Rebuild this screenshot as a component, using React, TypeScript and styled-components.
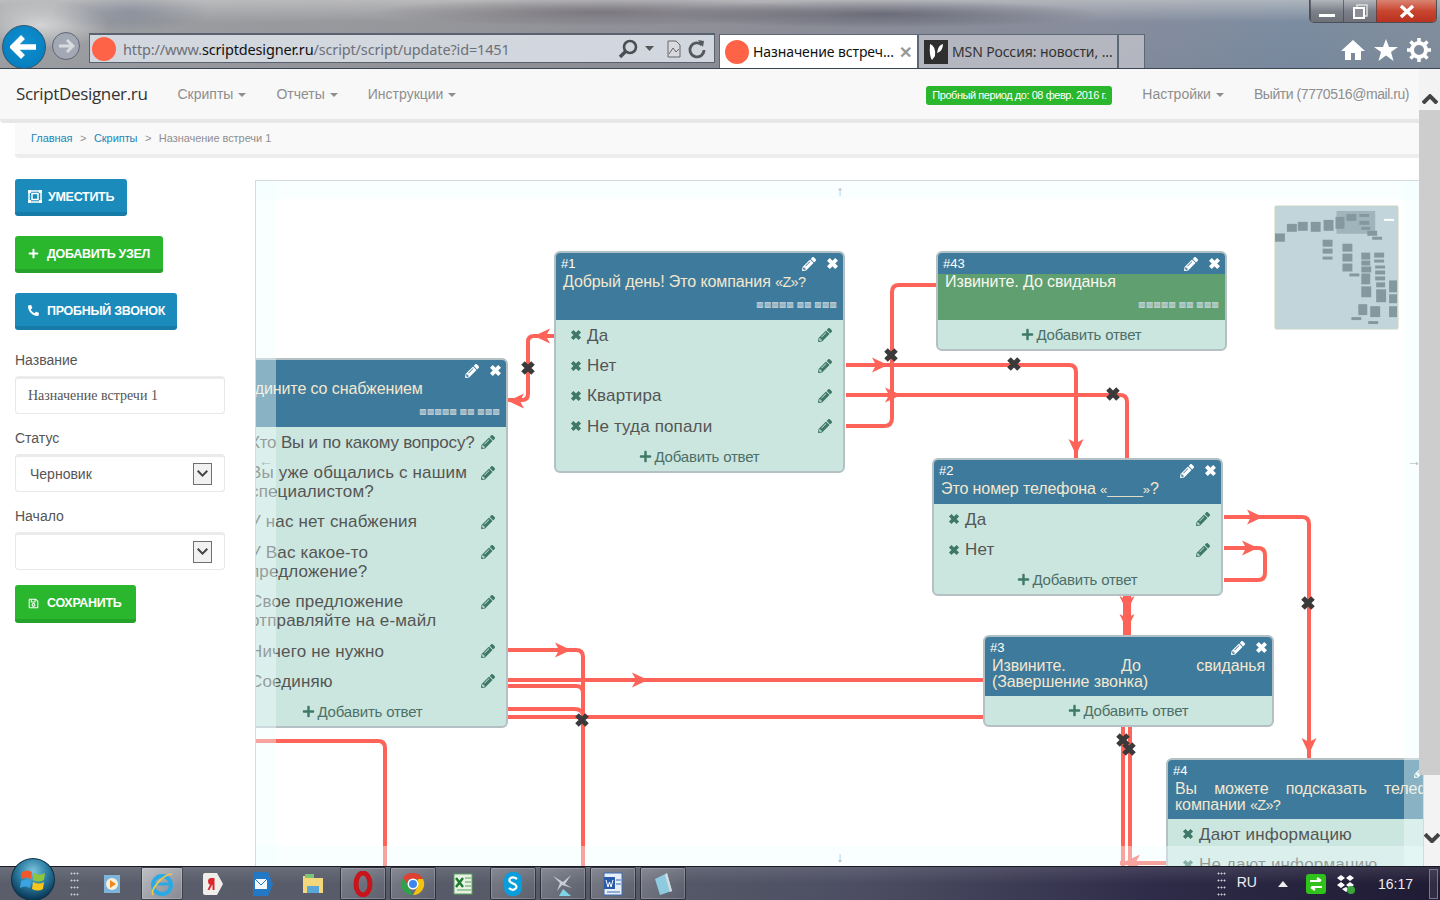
import React from "react";
import styled, { createGlobalStyle } from "styled-components";
import { FaPencilAlt, FaPlus, FaPhone, FaRegSave } from "react-icons/fa";

const Global = createGlobalStyle`
  html, body { margin: 0; padding: 0; width: 1440px; height: 900px; overflow: hidden; background: #fff; }
  body { font-family: "Liberation Sans", Arial, sans-serif; }
  * { box-sizing: border-box; }
`;

const Shell = styled.div`display: flex; flex-direction: column; width: 1440px; height: 900px; overflow: hidden;`;

/* ---------- browser chrome ---------- */
const Chrome = styled.header`
  height: 69px; flex: none; display: flex; flex-direction: column; justify-content: space-between;
  border-bottom: 1px solid #3b4652;
  background:
    radial-gradient(ellipse 230px 14px at 600px 12px, rgba(70,60,70,.42), transparent),
    radial-gradient(ellipse 220px 14px at 880px 14px, rgba(60,60,75,.5), transparent),
    radial-gradient(ellipse 80px 20px at 130px 12px, rgba(90,100,130,.35), transparent),
    radial-gradient(ellipse 70px 24px at 40px 25px, rgba(235,235,235,.7), transparent),
    linear-gradient(180deg, rgba(205,205,205,.6) 0, rgba(120,120,125,.1) 22px, rgba(90,95,110,.12) 100%),
    linear-gradient(90deg, #a3a5a8 0, #97989c 35%, #8e8f9a 55%, #8a90a0 75%, #7c8ea4 90%, #82909f 100%);
`;
const WindowButtons = styled.div`
  align-self: flex-end; margin-right: 3px; display: flex; height: 23px; border: 1px solid #4a4f58; border-top: 0;
  border-radius: 0 0 5px 5px; overflow: hidden;
`;
const WindowButton = styled.div<{ $w: number; $close?: boolean }>`
  width: ${p => p.$w}px; display: flex; align-items: center; justify-content: center; color: #fff;
  border-left: 1px solid rgba(60,60,70,.6); font-size: 14px; font-weight: 700;
  background: ${p => p.$close
    ? "linear-gradient(180deg,#d98472 0,#c9452f 50%,#b8321f 100%)"
    : "linear-gradient(180deg,#b2b5bb 0,#7d818a 50%,#6d7079 100%)"};
`;
const Toolbar = styled.div`display: flex; align-items: flex-end; height: 44px; padding-left: 2px;`;
const BackButton = styled.div`
  width: 44px; height: 44px; border-radius: 50%; background: radial-gradient(circle at 50% 40%, #0f90d2, #0479b9);
  border: 1px solid #34566c; display: flex; align-items: center; justify-content: center; margin-bottom: -1px;
`;
const ForwardButton = styled.div`
  width: 28px; height: 28px; border-radius: 50%; margin: 0 9px 8px 6px; background: #a2a9b5;
  border: 1px solid #5f6672; display: flex; align-items: center; justify-content: center;
`;
const AddressBar = styled.div`
  width: 626px; height: 30px; margin-bottom: 5px; display: flex; align-items: center; padding: 0 8px 0 2px;
  background: rgba(216,220,228,.92); border: 1px solid #59626f; border-top-width: 2px;
`;
const Favicon = styled.span`width: 24px; height: 24px; border-radius: 50%; background: #ff6347; flex: none;`;
const UrlText = styled.div`
  flex: 1; margin-left: 7px; font: 14.5px/20px "Noto Sans", "Open Sans", sans-serif; color: #6d7078; letter-spacing: -.15px;
  white-space: nowrap; b { font-weight: 400; color: #111; }
`;
const AddressIcons = styled.div`display: flex; align-items: center; gap: 7px;`;
const Tabs = styled.div`display: flex; height: 34px; margin-left: 4px;`;
const Tab = styled.div<{ $w: number; $active?: boolean }>`
  width: ${p => p.$w}px; display: flex; align-items: center; padding-left: 5px; white-space: nowrap; overflow: hidden;
  font: 14px/20px "Noto Sans", "Open Sans", sans-serif; color: ${p => p.$active ? "#111" : "#333"};
  background: ${p => p.$active ? "#fff" : "rgba(190,192,200,.82)"};
  border: 1px solid #5d6875; border-bottom: 0;
`;
const TabLabel = styled.span`margin-left: 4px; flex: 1; letter-spacing: -.1px;`;
const TabClose = styled.span`color: #999; font-size: 16px; font-weight: 700; margin: 0 5px 0 4px;`;
const MsnIcon = styled.span`width: 24px; height: 24px; background: #2f2f2f; flex: none; display: flex; align-items: center; justify-content: center;`;
const RightTools = styled.div`margin-left: auto; display: flex; gap: 9px; padding: 0 9px 6px 0; align-items: center;`;

/* ---------- site navbar ---------- */
const Page = styled.div`flex: 1; min-height: 0; display: flex; position: relative;`;
const Content = styled.div`flex: 1; min-width: 0; display: flex; flex-direction: column;`;
const Navbar = styled.nav`
  height: 54px; flex: none; display: flex; align-items: center; padding: 0 10px 0 16px; background: #f8f8f8;
  border-bottom: 4px solid #e7e7e7; border-radius: 0 0 0 4px; color: #8f8f8f; font-size: 14px;
`;
const Brand = styled.div`font: 17px/24px "Open Sans", "Liberation Sans", sans-serif; color: #333; letter-spacing: -.35px; margin-right: 30px;`;
const MenuItem = styled.div<{ $ml?: number; $tight?: boolean }>`
  display: flex; align-items: center; gap: 5px; margin-left: ${p => p.$ml ?? 0}px; white-space: nowrap; color: #8e8e8e;
  letter-spacing: ${p => p.$tight ? "-.45px" : "0"};
`;
const Caret = styled.span`width: 0; height: 0; border-left: 4px solid transparent; border-right: 4px solid transparent; border-top: 4px solid #8e8e8e; margin-top: 2px;`;
const Badge = styled.div`
  margin: 2px 30px 0 auto; width: 186px; height: 19px; background: #2ab72e; border-radius: 3px; color: #fff; font-size: 11px;
  letter-spacing: -.45px; text-align: center; line-height: 19px; white-space: nowrap;
`;
const Breadcrumb = styled.div`
  flex: none; height: 35px; margin-left: 15px; display: flex; align-items: center; gap: 7.5px; padding: 0 0 1px 16px;
  background: #f9f9f9; border-bottom: 4px solid #ededed; border-radius: 0 0 0 4px; font-size: 11px; color: #8f8f8f; letter-spacing: -.05px;
  a { color: #1a87b8; text-decoration: none; }
`;
const Work = styled.div`flex: 1; min-height: 0; display: flex; padding-top: 22px;`;

/* ---------- sidebar ---------- */
const Sidebar = styled.aside`width: 240px; margin-left: 15px; flex: none; display: flex; flex-direction: column; align-items: flex-start; margin-top: -1px;`;
const ActionButton = styled.div<{ $green?: boolean; $w: number; $mb?: number }>`
  width: ${p => p.$w}px; height: 37px; display: flex; align-items: center; gap: 7px; padding: 2px 0 0 13px;
  margin-bottom: ${p => p.$mb ?? 20}px; border-radius: 3px; color: #fff; font-size: 12.5px; font-weight: 700; white-space: nowrap; letter-spacing: -.3px;
  background: ${p => p.$green ? "#2ab72e" : "#1a8bbb"};
  border-bottom: 4px solid ${p => p.$green ? "#25a229" : "#167ba6"};
`;
const FieldLabel = styled.label`display: block; font-size: 14px; line-height: 16px; color: #555; margin-bottom: 8px;`;
const Field = styled.div<{ $serif?: boolean }>`
  width: 210px; height: 38px; margin-bottom: 16px; display: flex; align-items: center; justify-content: space-between;
  padding: 0 12px 0 ${p => p.$serif ? 12 : 14}px;
  background: #fff; border: 1px solid #e8e8e8; border-top: 3px solid #ebebeb; border-radius: 4px; color: #555;
  font-family: ${p => p.$serif ? '"Liberation Serif", serif' : '"Liberation Sans", sans-serif'}; font-size: 14px;
`;
const EmptyField = styled(Field)`justify-content: flex-end;`;
const SelectArrow = styled.span`
  width: 19px; height: 22px; background: #f1f1f1; border: 1px solid #6f6f6f; display: flex; align-items: center; justify-content: center;
`;
const FieldGroup = styled.div`display: flex; flex-direction: column;`;
const SaveButton = styled(ActionButton)`height: 38px; margin-top: -1px;`;

/* ---------- canvas ---------- */
const Canvas = styled.main`
  flex: 1; min-width: 0; position: relative; overflow: hidden; margin-right: -5px; background: #fff;
  border: 1px solid #d5dada; border-bottom: 0;
`;
const EdgeLayer = styled.svg`position: absolute; left: -1px; top: -1px; width: 1169px; height: 686px;`;
const MarkerLayer = styled.svg`position: absolute; left: -1px; top: -1px; width: 1169px; height: 686px; z-index: 3; pointer-events: none;`;
const Band = styled.div<{ $side: "top" | "bottom" | "left" | "right" }>`
  position: absolute; z-index: 4; background: rgba(240,255,255,.42);
  ${p => p.$side === "top" && "left:0;right:0;top:0;height:18px;"}
  ${p => p.$side === "bottom" && "left:0;right:0;bottom:0;height:20px;"}
  ${p => p.$side === "left" && "left:0;top:0;bottom:0;width:20px;"}
  ${p => p.$side === "right" && "right:0;top:0;bottom:0;width:19px;"}
`;
const PanArrow = styled.span<{ $x: number; $y: number }>`
  position: absolute; z-index: 5; left: ${p => p.$x - 256}px; top: ${p => p.$y - 181}px; transform: translate(-50%,-50%);
  color: #a9b4b6; font-size: 14px; line-height: 14px;
`;
const NodeCard = styled.article<{ $x: number; $y: number }>`
  position: absolute; z-index: 2; left: ${p => p.$x - 256}px; top: ${p => p.$y - 181}px; width: 291px;
  background: #cbe6de; border: 2px solid #b4c0c4; border-radius: 6px; overflow: hidden; color: #555;
`;
const NodeHead = styled.div`background: #3e7a9c; height: 21px; padding: 0 4px 0 5px; display: flex; align-items: center; justify-content: space-between; color: #fff; font-size: 13px;`;
const HeadTools = styled.div`display: flex; align-items: center; gap: 10px; font-size: 13px;`;
const NodeBody = styled.div<{ $ok?: boolean }>`
  background: ${p => p.$ok ? "#609f70" : "#3e7a9c"}; color: ${p => p.$ok ? "#f7f7ef" : "#f3e8cf"}; padding: 0 7px 6px 7px;
  font-size: 16px; line-height: 16px; letter-spacing: -.1px;
`;
const Just = styled.span`display: block; text-align: justify; text-align-last: justify; white-space: nowrap;`;
const Title = styled.div`white-space: nowrap;`;
const Quote = styled.span`font-size: 13px;`;
const Tail = styled.span`font-size: 14.5px; letter-spacing: -.7px;`;
const Tofu = styled.div`
  font: 8px/14px "DejaVu Sans", sans-serif; color: #c6d5da; text-align: right; padding-top: 8px; margin-bottom: 2px; margin-right: -1px; letter-spacing: 0;
`;
const Answer = styled.div`
  display: flex; align-items: flex-start; padding: 5.7px 11px 5.7px 14px; font-size: 17px; line-height: 19px; color: #555; gap: 5px; letter-spacing: .15px;
`;
const AnswerText = styled.span`flex: 1; min-width: 0; margin-right: -4px;`;
const TightLine = styled.span`white-space: nowrap; letter-spacing: -.2px;`;
const GreenIcon = styled.span<{ $w: number }>`color: #3f7868; flex: none; width: ${p => p.$w}px; display: inline-flex; align-items: center; justify-content: center; height: 19px;`;
const AddAnswer = styled.div`
  height: 29px; display: flex; align-items: center; justify-content: center; gap: 2px; font-size: 15px; letter-spacing: -.2px; color: #4d6f68;
`;
const AddIcon = styled.span`color: #3f7868; display: inline-flex;`;
const Minimap = styled.svg`position: absolute; z-index: 6; left: 1018px; top: 24px; width: 125px; height: 125px; border: 1px solid #e6ead8; border-radius: 3px; background: #c2d5da;`;

/* ---------- scrollbar ---------- */
const Scroll = styled.div`width: 21px; flex: none; display: flex; flex-direction: column; position: relative; z-index: 7;`;
const ScrollTop = styled.div`height: 41px; background: #f3f3f3; display: flex; align-items: flex-end; justify-content: center; padding-bottom: 6px;`;
const ScrollThumb = styled.div`height: 665px; background: #cdcdcd;`;
const ScrollEnd = styled.div`flex: 1; margin-left: 5px; background: #f3f3f3; display: flex; align-items: flex-start; justify-content: center; padding-top: 58px;`;

/* ---------- taskbar ---------- */
const Taskbar = styled.footer`
  height: 34px; flex: none; display: flex; align-items: center; position: relative; color: #eee; padding-left: 12px;
  border-top: 1px solid #1a1a25;
  background:
    linear-gradient(180deg, rgba(255,255,255,.1) 0, rgba(255,255,255,0) 50%),
    linear-gradient(90deg, #5a5e6b 0, #565a68 45%, #4c4d62 60%, #2f2c49 80%, #1f1b34 100%);
`;
const StartOrb = styled.div`
  position: absolute; z-index: 8; left: 11px; top: -9px; width: 44px; height: 43px; border-radius: 50%;
  background: radial-gradient(circle at 50% 30%, #7cc4dc 0, #2d7fa4 40%, #0d3d5c 75%, #0a2a40 100%); border: 1px solid #0e2e44;
  display: flex; align-items: center; justify-content: center;
`;
const Grip = styled.div<{ $ml: number; $mr?: number }>`
  width: 9px; height: 27px; margin-left: ${p => p.$ml}px; margin-right: ${p => p.$mr ?? 0}px; flex: none;
  background-image: radial-gradient(circle, #c9ccd2 .9px, transparent 1.1px); background-size: 3px 7px;
`;
const TaskSlot = styled.div<{ $on?: boolean; $lit?: boolean; $w?: number; $mr?: number }>`
  width: ${p => p.$w ?? 46}px; height: 33px; margin-right: ${p => p.$mr ?? 4}px; display: flex; align-items: center; justify-content: center; flex: none; border-radius: 2px;
  ${p => p.$on ? "border: 1px solid rgba(20,20,30,.7); box-shadow: inset 0 0 0 1px rgba(255,255,255,.18); background: linear-gradient(135deg, rgba(255,255,255,.22), rgba(255,255,255,.04));" : ""}
  ${p => p.$lit ? "background: linear-gradient(135deg, rgba(255,255,255,.58), rgba(255,255,255,.28));" : ""}
`;
const Tray = styled.div`margin-left: auto; display: flex; align-items: center; height: 100%; font-size: 14px; color: #eee;`;
const TrayText = styled.span<{ $ml: number; $up?: boolean }>`margin-left: ${p => p.$ml}px; ${p => p.$up ? "margin-top:-4px;" : ""}`;
const TrayIcon = styled.span<{ $ml: number }>`margin-left: ${p => p.$ml}px; display: inline-flex;`;
const ShowDesktop = styled.div`width: 9px; height: 30px; margin: 0 2px 0 16px; border: 1px solid #77778a; background: rgba(255,255,255,.08);`;

const RED = "#fd6358";

const Arrow = ({ x, y, a }: { x: number; y: number; a: number }) => (
  <polygon transform={`translate(${x} ${y}) rotate(${a})`} points="8,0 -8,-7.500 -4,0 -8,7.500" fill={RED} />
);
const Cross = ({ x, y }: { x: number; y: number }) => (
  <path d={`M${x - 5} ${y - 5}L${x + 5} ${y + 5}M${x + 5} ${y - 5}L${x - 5} ${y + 5}`} stroke="#3a3a3a" strokeWidth={5} />
);
const XIcon = ({ size = 12 }: { size?: number }) => (
  <svg width={size} height={size} viewBox="0 0 12 12"><path d="M2.200 2.200L9.800 9.800M9.800 2.200L2.200 9.800" stroke="currentColor" strokeWidth="3.600" /></svg>
);

const edges = [
  "M556 336H534Q528 336 528 342V394Q528 400 522 400H508",
  "M846 365H1069Q1076 365 1076 372V460",
  "M846 395H1120Q1127 395 1127 402V460",
  "M846 426H884Q892 426 892 418V292Q892 285 899 285H938",
  "M1224 517H1302Q1309 517 1309 524V760",
  "M1224 548H1258Q1265 548 1265 555V573Q1265 580 1258 580H1224",
  "M1125 595V637M1129 595V637",
  "M1123 727V866M1130 727V866",
  "M1120 863H1168",
  "M508 650H576Q583 650 583 657V866",
  "M508 680H985",
  "M508 686H576Q583 686 583 693V720",
  "M508 709H574Q583 709 583 716",
  "M508 717H985",
  "M256 741H378Q385 741 385 748V866",
];
const arrows = [
  [542, 336, 180], [516, 401, 180], [880, 365, 0], [893, 395, 0], [1076, 447, 90], [1255, 517, 0], [1250, 548, 0],
  [1127, 604, 90], [1127, 622, 90], [1309, 746, 90], [563, 650, 0], [640, 680, 0], [1132, 862, 180],
];
const crosses = [[528, 368], [891, 355], [1014, 364], [1113, 394], [1308, 603], [582, 720], [1123, 740], [1129, 749]];

const miniRects = [
  [45,113,75,138],[81,84,111,108],[114,78,144,105],[153,78,183,108],[192,72,222,105],[228,63,255,99],[261,54,291,75],
  [300,54,330,63],[300,75,330,87],[306,93,333,102],[324,105,354,120],[339,123,369,132],[189,132,219,153],[189,159,219,174],
  [189,183,219,192],[249,144,279,168],[249,174,279,198],[249,204,279,228],[270,234,300,243],[306,171,333,192],[306,195,333,210],
  [306,213,336,231],[306,234,333,267],[306,273,336,306],[345,171,375,186],[345,192,375,201],[348,210,378,219],[348,225,378,237],
  [348,243,378,255],[351,261,378,276],[351,282,381,321],[390,255,414,291],[390,297,414,324],[390,333,414,366],[297,327,324,360],
  [333,333,363,366],[276,366,306,375],[327,378,357,387],
];

type NodeProps = { id?: string; x: number; y: number; title?: React.ReactNode; tofu?: boolean; ok?: boolean; answers?: React.ReactNode[] };
const DiagramNode = ({ id, x, y, title, tofu, ok, answers = [] }: NodeProps) => (
  <NodeCard $x={x} $y={y}>
    <NodeHead>
      <span>{id}</span>
      <HeadTools><FaPencilAlt size={14} /><XIcon size={13} /></HeadTools>
    </NodeHead>
    <NodeBody $ok={ok}>
      <Title>{title}</Title>
      {tofu && <Tofu>▩▩▩▩▩ ▩▩ ▩▩▩</Tofu>}
    </NodeBody>
    {answers.map((a, i) => (
      <Answer key={i}>
        <GreenIcon $w={12}><XIcon size={12} /></GreenIcon>
        <AnswerText>{a}</AnswerText>
        <GreenIcon $w={14}><FaPencilAlt size={14} /></GreenIcon>
      </Answer>
    ))}
    <AddAnswer><AddIcon><FaPlus size={13} /></AddIcon>Добавить ответ</AddAnswer>
  </NodeCard>
);

const Chevron = ({ up, size = 16, w = 3 }: { up?: boolean; size?: number; w?: number }) => (
  <svg width={size} height={size * .65} viewBox="0 0 16 10">
    <path d={up ? "M1 9L8 2L15 9" : "M1 1L8 8L15 1"} fill="none" stroke="#444" strokeWidth={w} />
  </svg>
);

const TaskIcon = ({ k }: { k: string }) => {
  switch (k) {
    case "media": return <svg width="18" height="20" viewBox="0 0 18 20"><rect x="1" y="1" width="16" height="18" fill="#7fb4d8"/><circle cx="9" cy="10" r="6" fill="#f6f0e0"/><path d="M7 6l6 4-6 4z" fill="#ee8a1d"/></svg>;
    case "ie": return <svg width="26" height="26" viewBox="0 0 26 26"><circle cx="13" cy="14" r="9" fill="none" stroke="#29a9e6" strokeWidth="4"/><path d="M6 13h15" stroke="#29a9e6" strokeWidth="3"/><path d="M4 24C1 20 12 4 23 3" fill="none" stroke="#f5c842" strokeWidth="1.6"/></svg>;
    case "ya": return <svg width="22" height="24" viewBox="0 0 22 24"><path d="M1 3Q1 1 3 1H15L21 12L15 23H3Q1 23 1 21z" fill="#f0eeea"/><path d="M11 6H9Q6 6 6 9.500Q6 12 8 12.500L5.500 18H7.500L10 13H10.500V18H12.500V6z" fill="#d9272e"/></svg>;
    case "mail": return <svg width="22" height="26" viewBox="0 0 22 26"><path d="M1 1H16L21 13L16 25H1z" fill="#2278c4"/><path d="M3 8H15V18H3z" fill="#f2f8fd"/><path d="M3 8L9 14L15 8" fill="none" stroke="#2278c4"/></svg>;
    case "folder": return <svg width="22" height="22" viewBox="0 0 22 22"><path d="M1 3H9L11 5H21V20H1z" fill="#f5d77b"/><path d="M3 1H12V5H3z" fill="#7cc576"/><rect x="5" y="13" width="12" height="7" fill="#5aa6d8"/></svg>;
    case "opera": return <svg width="20" height="26" viewBox="0 0 20 26"><ellipse cx="10" cy="13" rx="7" ry="11" fill="none" stroke="#c8151b" strokeWidth="5"/></svg>;
    case "chrome": return <svg width="24" height="24" viewBox="0 0 24 24"><path d="M12 1A11 11 0 0 1 22 7H12z" fill="#e0402f"/><path d="M2 6A11 11 0 0 1 12 1V7H7L8 13z" fill="#e0402f"/><path d="M2 6L8 16L12 23A11 11 0 0 1 2 6z" fill="#2fa24a"/><path d="M22 7A11 11 0 0 1 12 23L17 14V7z" fill="#f4c30e"/><circle cx="12" cy="12" r="5.500" fill="#fff"/><circle cx="12" cy="12" r="4" fill="#3f85f0"/></svg>;
    case "excel": return <svg width="20" height="22" viewBox="0 0 20 22"><rect x="1" y="1" width="18" height="20" fill="#e7f2e4" stroke="#5aa05a"/><path d="M3 5l7 9M10 5l-7 9" stroke="#1f7a2f" strokeWidth="2.400"/><path d="M12 5h6M12 9h6M12 13h6M4 17h14" stroke="#5aa05a"/></svg>;
    case "skype": return <svg width="20" height="26" viewBox="0 0 20 26"><rect x="1" y="1" width="18" height="24" rx="8" fill="#0a9ddc"/><path d="M14 8Q10 5 7 7.500Q5 10 9 12L12 13.500Q15 16 12 18Q9 20 6 17" fill="none" stroke="#fff" strokeWidth="2.200"/></svg>;
    case "tool": return <svg width="24" height="26" viewBox="0 0 24 26"><path d="M2 5L12 11L20 4L14 13L21 17L11 14L6 20L9 12z" fill="#c9ced6"/><path d="M12 18L20 25H8z" fill="#7fd5e8"/></svg>;
    case "word": return <svg width="20" height="24" viewBox="0 0 20 24"><rect x="1" y="1" width="18" height="22" fill="#e8eef7" stroke="#3d6cb3"/><rect x="1" y="5" width="11" height="12" fill="#2a5caa"/><path d="M3 8l2 7 1.500-5 1.500 5 2-7" fill="none" stroke="#fff"/><path d="M13 8h5M13 12h5M4 20h13" stroke="#3d6cb3"/></svg>;
    default: return <svg width="22" height="24" viewBox="0 0 22 24"><path d="M3 7L15 1L20 19L8 23z" fill="#8fcbe0"/><path d="M15 1L20 19L18 20L13 3z" fill="#d8dcdf"/></svg>;
  }
};

const tasks: { k: string; on?: boolean; lit?: boolean; w?: number; mr?: number }[] = [
  { k: "media", mr: 6 }, { k: "ie", on: true, lit: true, w: 42, mr: 7 }, { k: "ya" }, { k: "mail" }, { k: "folder" },
  { k: "opera", on: true }, { k: "chrome", on: true }, { k: "excel" }, { k: "skype", on: true },
  { k: "tool", on: true }, { k: "word", on: true }, { k: "note", on: true },
];

export default function App() {
  return (
    <Shell>
      <Global />
      <Chrome>
        <WindowButtons>
          <WindowButton $w={33}><svg width="16" height="14" viewBox="0 0 16 14"><rect x="0" y="10" width="16" height="3" fill="#fff"/></svg></WindowButton>
          <WindowButton $w={33}><svg width="15" height="15" viewBox="0 0 15 15"><rect x="4" y="1" width="10" height="11" fill="none" stroke="#ddd" strokeWidth="1.500"/><rect x="1" y="4" width="10" height="10" fill="#8a8d95" stroke="#fff" strokeWidth="2"/></svg></WindowButton>
          <WindowButton $w={60} $close><svg width="16" height="13" viewBox="0 0 16 13"><path d="M2 1L14 12M14 1L2 12" stroke="#fff" strokeWidth="3.400"/></svg></WindowButton>
        </WindowButtons>
        <Toolbar>
          <BackButton><svg width="28" height="26" viewBox="0 0 28 26"><path d="M13 3L3 13L13 23M4 13H26" fill="none" stroke="#fff" strokeWidth="5.500"/></svg></BackButton>
          <ForwardButton><svg width="18" height="16" viewBox="0 0 18 16"><path d="M10 2L16 8L10 14M16 8H2" fill="none" stroke="#d8dbe0" strokeWidth="2.800"/></svg></ForwardButton>
          <AddressBar>
            <Favicon />
            <UrlText>http://www.<b>scriptdesigner.ru</b>/script/script/update?id=1451</UrlText>
            <AddressIcons>
              <svg width="20" height="20" viewBox="0 0 20 20"><circle cx="12" cy="8" r="6" fill="none" stroke="#4a4d52" strokeWidth="2.600"/><path d="M8 12L2 18" stroke="#4a4d52" strokeWidth="3.400"/></svg>
              <svg width="9" height="5" viewBox="0 0 9 5"><path d="M0 0H9L4.500 5z" fill="#555"/></svg>
              <svg width="14" height="18" viewBox="0 0 14 18" style={{ marginLeft: 6 }}><path d="M1 1H9L13 5V17H1z" fill="#d6d9de" stroke="#666"/><path d="M2 14L6 8L9 12L12 9" fill="none" stroke="#666"/></svg>
              <svg width="18" height="20" viewBox="0 0 18 20"><path d="M14 6A7 7 0 1 0 16 11" fill="none" stroke="#55585e" strokeWidth="2.800"/><path d="M10 1L16 2L15 8z" fill="#55585e"/></svg>
            </AddressIcons>
          </AddressBar>
          <Tabs>
            <Tab $w={199} $active><Favicon /><TabLabel>Назначение встреч...</TabLabel><TabClose>✕</TabClose></Tab>
            <Tab $w={200}><MsnIcon><svg width="16" height="20" viewBox="0 0 16 20"><path d="M2 2Q8 4 7 14L4 18Q1 14 2 2zM9 11Q10 3 15 2Q15 9 9 11z" fill="#fff"/></svg></MsnIcon><TabLabel>MSN Россия: новости, ...</TabLabel></Tab>
            <Tab $w={27} />
          </Tabs>
          <RightTools>
            <svg width="24" height="22" viewBox="0 0 24 22"><path d="M12 1L24 12H20V21H14V14H10V21H4V12H0z" fill="#fff"/></svg>
            <svg width="24" height="22" viewBox="0 0 24 22"><path d="M12 0L15 8H24L17 13L19.500 22L12 16.500L4.500 22L7 13L0 8H9z" fill="#fff"/></svg>
            <svg width="24" height="24" viewBox="0 0 24 24"><circle cx="12" cy="12" r="7" fill="none" stroke="#fff" strokeWidth="4"/><path d="M12 0V5M12 19V24M0 12H5M19 12H24M3.500 3.500L7 7M17 17L20.500 20.500M20.500 3.500L17 7M7 17L3.500 20.500" stroke="#fff" strokeWidth="3.500"/></svg>
          </RightTools>
        </Toolbar>
      </Chrome>
      <Page>
        <Content>
          <Navbar>
            <Brand>ScriptDesigner.ru</Brand>
            <MenuItem>Скрипты <Caret /></MenuItem>
            <MenuItem $ml={30}>Отчеты <Caret /></MenuItem>
            <MenuItem $ml={30}>Инструкции <Caret /></MenuItem>
            <Badge>Пробный период до: 08 февр. 2016 г.</Badge>
            <MenuItem>Настройки <Caret /></MenuItem>
            <MenuItem $ml={30} $tight>Выйти (7770516@mail.ru)</MenuItem>
          </Navbar>
          <Breadcrumb>
            <a>Главная</a><span>&gt;</span><a>Скрипты</a><span>&gt;</span><span>Назначение встречи 1</span>
          </Breadcrumb>
          <Work>
            <Sidebar>
              <ActionButton $w={112}>
                <svg width="14" height="13" viewBox="0 0 14 13" style={{ marginRight: -1 }}><path d="M1 1H13V12H1z M4 3.500H10V9.500H4z" fill="none" stroke="#fff" strokeWidth="1.500"/><path d="M0 0H3V3H0zM11 0H14V3H11zM0 10H3V13H0zM11 10H14V13H11z" fill="#fff"/></svg>
                УМЕСТИТЬ
              </ActionButton>
              <ActionButton $w={148} $green><FaPlus size={11} style={{ marginRight: 1 }} />ДОБАВИТЬ УЗЕЛ</ActionButton>
              <ActionButton $w={162} $mb={22}><FaPhone size={11} style={{ transform: "scaleX(-1)", marginRight: 1 }} />ПРОБНЫЙ ЗВОНОК</ActionButton>
              <FieldGroup>
                <FieldLabel>Название</FieldLabel>
                <Field $serif>Назначение встречи 1</Field>
                <FieldLabel>Статус</FieldLabel>
                <Field>Черновик<SelectArrow><Chevron size={11} w={3} /></SelectArrow></Field>
                <FieldLabel>Начало</FieldLabel>
                <EmptyField><SelectArrow><Chevron size={11} w={3} /></SelectArrow></EmptyField>
              </FieldGroup>
              <SaveButton $w={121} $green><FaRegSave size={11} style={{ marginRight: 1 }} />СОХРАНИТЬ</SaveButton>
            </Sidebar>
            <Canvas>
              <EdgeLayer viewBox="255 180 1169 686">
                {edges.map(d => <path key={d} d={d} fill="none" stroke={RED} strokeWidth={4} />)}
                {arrows.map(([x, y, a]) => <Arrow key={`${x}-${y}`} x={x} y={y} a={a} />)}
              </EdgeLayer>
              <DiagramNode id="#1" x={554} y={251} tofu title={<>Добрый день! Это компания <Tail>«Z»?</Tail></>} answers={["Да", "Нет", "Квартира", "Не туда попали"]} />
              <DiagramNode id="#43" x={936} y={251} tofu ok title="Извините. До свиданья" />
              <DiagramNode id="" x={217} y={358} tofu title="Соедините со снабжением" answers={[
                <TightLine>Кто Вы и по какому вопросу?</TightLine>, "Вы уже общались с нашим специалистом?", "У нас нет снабжения",
                "У Вас какое-то предложение?", "Свое предложение отправляйте на е-майл", "Ничего не нужно", "Соединяю",
              ]} />
              <DiagramNode id="#2" x={932} y={458} title={<>Это номер телефона <Quote>«_____»</Quote>?</>} answers={["Да", "Нет"]} />
              <DiagramNode id="#3" x={983} y={635} title={<><Just>Извините. До свиданья</Just>(Завершение звонка)</>} />
              <DiagramNode id="#4" x={1166} y={758} title={<><Just>Вы можете подсказать телефон</Just>компании <Tail>«Z»?</Tail></>} answers={["Дают информацию", "Не дают информацию"]} />
              <MarkerLayer viewBox="255 180 1169 686">
                {crosses.map(([x, y]) => <Cross key={`${x}-${y}`} x={x} y={y} />)}
              </MarkerLayer>
              <Band $side="top" /><Band $side="bottom" /><Band $side="left" /><Band $side="right" />
              <PanArrow $x={840} $y={191}>↑</PanArrow>
              <PanArrow $x={840} $y={857}>↓</PanArrow>
              <PanArrow $x={266} $y={461}>←</PanArrow>
              <PanArrow $x={1414} $y={461}>→</PanArrow>
              <Minimap viewBox="45 30 372 372">
                <rect x="45" y="30" width="372" height="372" fill="#c2d5da" />
                <rect x="231" y="45" width="117" height="69" fill="#9fb4bb" />
                {miniRects.map(([a, b, c, d]) => <rect key={`${a}-${b}`} x={a} y={b} width={c - a} height={d - b} fill="#83999f" />)}
                <rect x="375" y="69" width="30" height="6" fill="#fff" />
              </Minimap>
            </Canvas>
          </Work>
        </Content>
        <Scroll>
          <ScrollTop><Chevron up size={16} w={4} /></ScrollTop>
          <ScrollThumb />
          <ScrollEnd><Chevron size={16} w={4} /></ScrollEnd>
        </Scroll>
      </Page>
      <Taskbar>
        <StartOrb>
          <svg width="26" height="24" viewBox="0 0 26 24"><path d="M2 4Q7 1 12 4L11 11Q6 8 1 11z" fill="#f0582a"/><path d="M14 5Q19 8 25 5L24 12Q19 15 13 12z" fill="#8cc63f"/><path d="M1 13Q6 10 11 13L10 20Q5 17 0 20z" fill="#3aa3e3"/><path d="M13 14Q19 17 24 14L23 21Q18 24 12 21z" fill="#f8c51c"/></svg>
        </StartOrb>
        <Grip $ml={58} $mr={10} />
        {tasks.map(t => <TaskSlot key={t.k} $on={t.on} $lit={t.lit} $w={t.w} $mr={t.mr}><TaskIcon k={t.k} /></TaskSlot>)}
        <Tray>
          <Grip $ml={0} />
          <TrayText $ml={11} $up>RU</TrayText>
          <TrayIcon $ml={21}><svg width="10" height="6" viewBox="0 0 10 6"><path d="M5 0L10 6H0z" fill="#eee"/></svg></TrayIcon>
          <TrayIcon $ml={18}><svg width="20" height="20" viewBox="0 0 20 20"><rect width="20" height="20" rx="3" fill="#2fc21a"/><path d="M4 7H14M11 4L15 7M16 13H6M9 16L5 13" stroke="#fff" strokeWidth="2.200" fill="none"/></svg></TrayIcon>
          <TrayIcon $ml={10}><svg width="20" height="20" viewBox="0 0 20 20"><path d="M5 1L9 4L5 7L1 4zM14 1L18 4L14 7L10 4zM5 8L9 11L5 14L1 11zM14 8L18 11L14 14L10 11zM10 13L13 15L10 18L6 15z" fill="#fff"/><circle cx="15" cy="16" r="4" fill="#3aa63a"/></svg></TrayIcon>
          <TrayText $ml={22}>16:17</TrayText>
          <ShowDesktop />
        </Tray>
      </Taskbar>
    </Shell>
  );
}
